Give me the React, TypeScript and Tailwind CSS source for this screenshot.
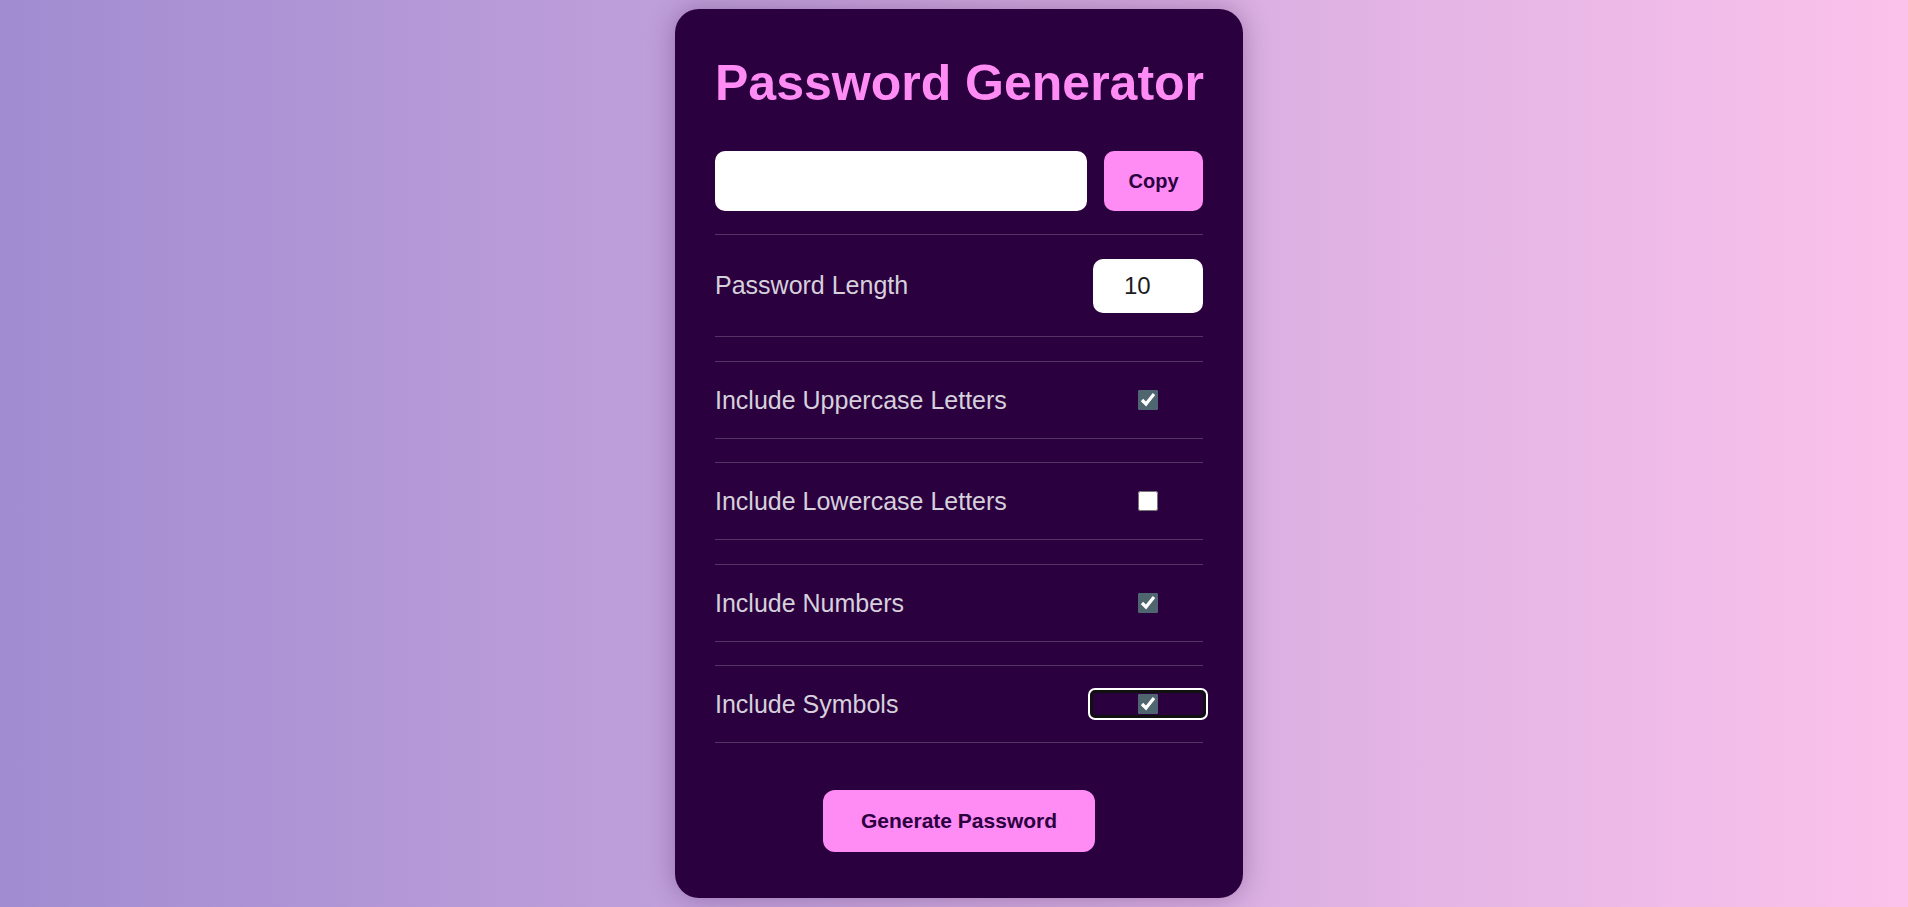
import { useState } from "react";

const options = [
  { id: "upper", label: "Include Uppercase Letters", checked: true },
  { id: "lower", label: "Include Lowercase Letters", checked: false },
  { id: "numbers", label: "Include Numbers", checked: true },
  { id: "symbols", label: "Include Symbols", checked: true },
];

export default function App() {
  const [length, setLength] = useState("10");
  const [checks, setChecks] = useState<Record<string, boolean>>(
    Object.fromEntries(options.map((o) => [o.id, o.checked])),
  );

  return (
    <div className="min-h-screen flex items-center justify-center bg-linear-to-r from-[#a18cd1] to-[#fbc2eb] pl-[10px] font-['Liberation_Sans',Arial,sans-serif]">
      <div className="w-[568px] rounded-[24px] bg-[#2b003f] px-10 pt-[46px] pb-[46px] shadow-[0_0_28px_rgba(40,0,60,0.3)]">
        <h1 className="whitespace-nowrap text-center text-[50px] font-bold leading-[57.5px] text-[#ff8bf5]">
          Password Generator
        </h1>

        {/* output + copy */}
        <div className="mt-[38.5px] flex gap-[17px]">
          <input
            readOnly
            className="h-[60px] flex-1 rounded-[10px] bg-white px-4 text-[20px] text-black outline-none"
          />
          <button className="h-[60px] w-[99px] rounded-[10px] bg-[#ff8bf5] text-[20px] font-bold text-[#2b003f]">
            Copy
          </button>
        </div>

        {/* length */}
        <div className="mt-[23px] flex items-center justify-between border-y border-[#553366] pt-6 pb-[23px]">
          <span className="text-[25px] text-[#d6d0dc]">Password Length</span>
          <input
            type="text"
            value={length}
            onChange={(e) => setLength(e.target.value)}
            className="h-[54px] w-[110px] rounded-[10px] bg-white pl-[31px] text-[24px] text-[#1c1c24] outline-none"
          />
        </div>

        {options.map((o, i) => (
          <div
            key={o.id}
            className="mt-[23.5px] flex items-center justify-between border-y border-[#553366] py-6"
          >
            <span className="text-[25px] leading-[28px] text-[#d6d0dc]">{o.label}</span>
            <span
              className={
                i === options.length - 1
                  ? "flex h-[22px] w-[110px] items-center justify-center rounded-[2px] ring-[3px] ring-[#101010] outline-2 outline-offset-[3px] outline-white"
                  : "flex h-[22px] w-[110px] items-center justify-center"
              }
            >
              <input
                type="checkbox"
                checked={checks[o.id]}
                onChange={() => setChecks({ ...checks, [o.id]: !checks[o.id] })}
                className="h-5 w-5 accent-[#4f6570]"
              />
            </span>
          </div>
        ))}

        <div className="mt-[47px] flex justify-center">
          <button className="h-[62px] w-[272px] rounded-[12px] bg-[#ff8bf5] text-[21px] font-bold text-[#2b003f]">
            Generate Password
          </button>
        </div>
      </div>
    </div>
  );
}
